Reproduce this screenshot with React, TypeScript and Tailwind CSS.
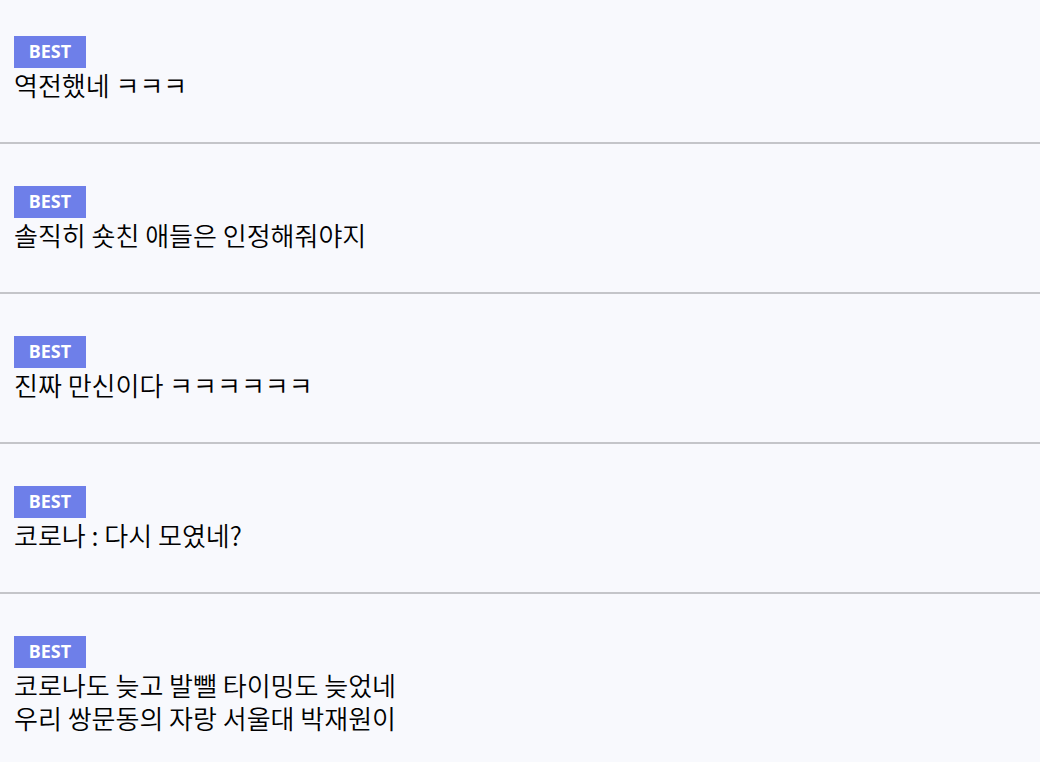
const comments = [
  ['역전했네 ㅋㅋㅋ'],
  ['솔직히 숏친 애들은 인정해줘야지'],
  ['진짜 만신이다 ㅋㅋㅋㅋㅋㅋ'],
  ['코로나 : 다시 모였네?'],
  ['코로나도 늦고 발뺄 타이밍도 늦었네', '우리 쌍문동의 자랑 서울대 박재원이'],
]

export default function App() {
  return (
    <div className="min-h-[762px] overflow-hidden bg-[#f8f9fd]">
      <ul className="-mt-[6px]">
        {comments.map((lines, i) => (
          <li key={i} className="border-b-2 border-[#c4c5c9] px-[14px] pt-[42px] pb-[41px]">
            <span className="inline-flex h-[32px] w-[72px] items-center justify-center bg-[#6e7fe9] pb-[2px] font-['Noto_Sans',sans-serif] text-[18px] font-bold text-white">
              BEST
            </span>
            <p className="font-['Noto_Sans_CJK_KR',sans-serif] text-[26px] font-[350] leading-[33px] text-black">
              {lines.map((l, j) => (
                <span key={j}>
                  {j > 0 && <br />}
                  {l}
                </span>
              ))}
            </p>
          </li>
        ))}
      </ul>
    </div>
  )
}
